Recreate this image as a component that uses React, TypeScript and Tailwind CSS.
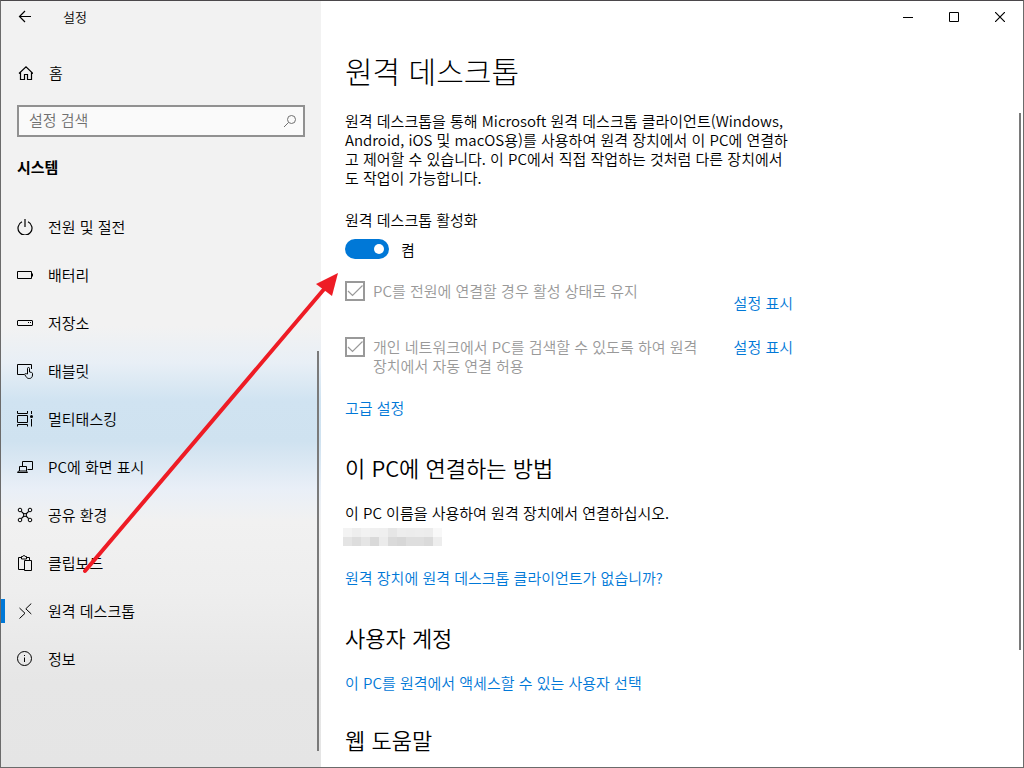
import React, { useState } from "react"

type IconProps = { children: React.ReactNode }

function Icon({ children }: IconProps) {
  return (
    <svg width="16" height="16" viewBox="0 0 16 16" fill="none" stroke="currentColor" strokeWidth="1" className="shrink-0" aria-hidden="true">
      {children}
    </svg>
  )
}

const NAV_ITEMS = [
  {
    label: "전원 및 절전",
    icon: <path d="M5 2.800a7 7 0 1 0 6 0M8 0v8" strokeWidth="1.200" />,
  },
  {
    label: "배터리",
    icon: <path d="M.5 4.500h14v7H.5zM15.500 6.500v3" />,
  },
  {
    label: "저장소",
    icon: (
      <>
        <rect x=".5" y="5.500" width="15" height="5" rx=".5" />
        <path d="M11 7.500h1M13 7.500h1" />
      </>
    ),
  },
  {
    label: "태블릿",
    icon: (
      <>
        <path d="M7 11.500H.5v-10h14V6" />
        <path d="M10.500 11V5.500a1 1 0 0 1 2 0V9l2 .4c.7.2 1 .6 1 1.300V12c0 2-1.200 3.500-3.200 3.500-1.600 0-2.500-.6-3.300-1.900l-1.500-2.400c.7-.8 1.600-.6 3-.2z" />
      </>
    ),
  },
  {
    label: "멀티태스킹",
    icon: (
      <>
        <path d="M.5 0v2.500h10V0M.5 15.500v-2h10v2M.5 4.500h10v7H.5zM14.500 0v3M14.500 8v7.500" />
        <circle cx="14.500" cy="5.500" r="1.500" fill="currentColor" stroke="none" />
      </>
    ),
  },
  {
    label: "PC에 화면 표시",
    icon: <path d="M5.500 7V2.500h10v8h-5M2.500 12V7.500h7V12M.5 13.500h10l-1-1.500H1.500z" />,
  },
  {
    label: "공유 환경",
    icon: (
      <>
        <circle cx="3" cy="3" r="1.800" />
        <circle cx="13" cy="3" r="1.800" />
        <circle cx="3" cy="13" r="1.800" />
        <circle cx="13" cy="13" r="1.800" />
        <circle cx="8" cy="8" r="1.500" />
        <path d="M4.300 4.300 7 7M11.700 4.300 9 7M4.300 11.700 7 9M11.700 11.700 9 9" strokeWidth="1.200" />
      </>
    ),
  },
  {
    label: "클립보드",
    icon: <path d="M7 14.500H1.500v-12H4M10 2.500h2.500V5M4.500 4V1.500h1.300c0-1.300 2.400-1.300 2.400 0h1.300V4zM7.500 5.500h7v10h-7z" />,
  },
  {
    label: "원격 데스크톱",
    icon: <path d="m2.500 5 5.500 5.300-5.500 5.200M14.300.5 8.800 5.800l5.500 5.200" />,
    active: true,
  },
  {
    label: "정보",
    icon: (
      <>
        <circle cx="7.500" cy="7.500" r="7" />
        <path d="M7.500 6.500V11M7.500 4v1" />
      </>
    ),
  },
]

// Pixelated PC name, two rows of blocks
const MOSAIC = [
  ["#f3f3f3", "#eeeeee", "#f2f2f2", "#f0f0f0", "#efefef", "#e6e6e6", "#ededed", "#ececec", "#ededed", "#ececec", "#f8f8f8"],
  ["#e4e4e4", "#dddddd", "#e5e5e5", "#d9d9d9", "#ebebeb", "#dadada", "#d7d7d7", "#dedede", "#dedede", "#dadada", "#ededed"],
]

function Sidebar() {
  return (
    <aside className="relative w-80 shrink-0 bg-[linear-gradient(180deg,#f2f2f2_0px,#f2f2f2_325px,#e8eff6_362px,#d0e3f1_400px,#cfe2f0_440px,#e9eff7_488px,#f1f1f1_520px,#eeeeee_590px,#e6e6e6_680px,#e5e5e5_767px)]">
      <div className="flex h-8 items-center pl-4">
        <button type="button" aria-label="뒤로" className="mr-[30px]">
          <Icon>
            <path d="M14 7.500H2.500M8 2 2.500 7.500 8 13" strokeWidth="1.200" />
          </Icon>
        </button>
        <span className="pb-0.5 text-[13px]">설정</span>
      </div>

      <a href="#home" className="mt-4 flex h-12 items-center gap-4 pl-4">
        <Icon>
          <path d="m2 8.500 7-6.700 7 6.700M3.500 7.500v7h4v-5h3v5h4v-7" strokeWidth="1.200" />
        </Icon>
        <span className="pb-0.5">홈</span>
      </a>

      <div className="relative mx-4 mt-2">
        <input
          type="text"
          aria-label="설정 검색"
          placeholder="설정 검색"
          className="block h-8 w-full border-2 border-[#919191] bg-white/60 pr-8 pb-[3px] pl-2.5 outline-none placeholder:text-[#707070]"
        />
        <svg width="14" height="14" viewBox="0 0 14 14" fill="none" stroke="#707070" className="absolute top-[9px] right-2" aria-hidden="true">
          <circle cx="8.500" cy="5.500" r="4" />
          <path d="M5.500 8.500 1 13" />
        </svg>
      </div>

      <h2 className="mt-1.5 flex h-12 items-center pb-0.5 pl-4 font-bold">시스템</h2>

      <nav className="mt-3" aria-label="시스템">
        {NAV_ITEMS.map((item) => (
          <a
            key={item.label}
            href={`#${item.label}`}
            aria-current={item.active ? "page" : undefined}
            className="relative flex h-12 items-center gap-[15px] pl-4"
          >
            {item.active && <span className="absolute left-0 h-6 w-1 bg-[#0078d7]" />}
            <Icon>{item.icon}</Icon>
            <span className="pb-0.5">{item.label}</span>
          </a>
        ))}
      </nav>

      {/* Scroll thumb */}
      <div className="absolute top-[350px] right-0.5 bottom-4 w-0.5 bg-[#7a7a7a]" />
    </aside>
  )
}

function WindowButtons() {
  return (
    <div className="flex h-8 justify-end">
      <button type="button" aria-label="최소화" className="flex w-[46px] items-center justify-center">
        <svg width="10" height="10" viewBox="0 0 10 10" stroke="black" fill="none">
          <path d="M0 5.500h10" />
        </svg>
      </button>
      <button type="button" aria-label="최대화" className="flex w-[46px] items-center justify-center">
        <svg width="10" height="10" viewBox="0 0 10 10" stroke="black" fill="none">
          <path d="M.5.5h9v9h-9z" />
        </svg>
      </button>
      <button type="button" aria-label="닫기" className="flex w-[46px] items-center justify-center">
        <svg width="10" height="10" viewBox="0 0 10 10" stroke="black" fill="none">
          <path d="m0 0 10 10M10 0 0 10" strokeWidth="1.200" />
        </svg>
      </button>
    </div>
  )
}

type OptionProps = { id: string; children: React.ReactNode }

function DisabledOption({ id, children }: OptionProps) {
  return (
    <div className="flex flex-1 gap-2">
      <span className="relative size-5 shrink-0">
        <input id={id} type="checkbox" defaultChecked disabled className="block size-5 appearance-none border-2 border-[#999999]" />
        <svg width="20" height="20" viewBox="0 0 20 20" fill="none" stroke="#999999" strokeWidth="1.200" className="absolute inset-0" aria-hidden="true">
          <path d="m3 10 4.500 4.500L17.500 4.500" />
        </svg>
      </span>
      <label htmlFor={id} className="text-[#999999]">{children}</label>
    </div>
  )
}

function Content() {
  const [enabled, setEnabled] = useState(true)

  return (
    <main className="relative min-w-0 flex-1 bg-white">
      <WindowButtons />

      <div className="mt-[17px] max-w-[472px] pl-6">
        <h1 className="text-[30px] leading-10 font-light">원격 데스크톱</h1>

        <p className="mt-[21px]">
          원격 데스크톱을 통해 Microsoft 원격 데스크톱 클라이언트(Windows, Android, iOS 및 macOS용)를 사용하여 원격 장치에서 이 PC에 연결하고 제어할 수 있습니다. 이 PC에서 직접 작업하는 것처럼 다른 장치에서도 작업이 가능합니다.
        </p>

        <label htmlFor="remote-desktop" className="mt-[23px] block">원격 데스크톱 활성화</label>
        <div className="mt-2.5 flex items-center gap-3">
          <input
            id="remote-desktop"
            type="checkbox"
            role="switch"
            checked={enabled}
            onChange={(e) => setEnabled(e.target.checked)}
            className="flex h-5 w-11 appearance-none items-center rounded-full bg-[#999999] px-[5px] before:size-2.5 before:rounded-full before:bg-white checked:justify-end checked:bg-[#0078d7]"
          />
          <span>{enabled ? "켬" : "끔"}</span>
        </div>

        <div className="mt-[22px] flex h-14 gap-6">
          <DisabledOption id="keep-awake">PC를 전원에 연결할 경우 활성 상태로 유지</DisabledOption>
          <a href="#power" className="mt-3 self-start text-[#0078d7]">설정 표시</a>
        </div>
        <div className="flex gap-6">
          <DisabledOption id="discoverable">개인 네트워크에서 PC를 검색할 수 있도록 하여 원격 장치에서 자동 연결 허용</DisabledOption>
          <a href="#network" className="self-start text-[#0078d7]">설정 표시</a>
        </div>

        <a href="#advanced" className="mt-[23px] block text-[#0078d7]">고급 설정</a>

        <h2 className="mt-[35px] text-[22px] leading-[30px]">이 PC에 연결하는 방법</h2>
        <p className="mt-[21px]">이 PC 이름을 사용하여 원격 장치에서 연결하십시오.</p>
        <svg width="99" height="18" className="mt-1.5 -ml-0.5 block" shapeRendering="crispEdges" aria-hidden="true">
          {MOSAIC.map((row, y) => row.map((fill, x) => <rect key={`${x}-${y}`} x={x * 9} y={y * 9} width="9" height="9" fill={fill} />))}
        </svg>
        <a href="#client" className="mt-[22px] block text-[#0078d7]">원격 장치에 원격 데스크톱 클라이언트가 없습니까?</a>

        <h2 className="mt-[35px] text-[22px] leading-[30px]">사용자 계정</h2>
        <a href="#users" className="mt-[21px] block text-[#0078d7]">이 PC를 원격에서 액세스할 수 있는 사용자 선택</a>

        <h2 className="mt-8 text-[22px] leading-[30px]">웹 도움말</h2>
      </div>

      {/* Scroll thumb */}
      <div className="absolute top-28 right-0.5 bottom-[117px] w-0.5 bg-[#7a7a7a]" />
    </main>
  )
}

export default function App() {
  return (
    <div
      lang="ko"
      className="relative flex min-h-screen border border-[#6b6b6b] border-t-[#4b484b] font-['Noto_Sans_CJK_KR',sans-serif] text-[15px] leading-[19px] font-[350] text-black"
    >
      <Sidebar />
      <Content />

      {/* Arrow pointing at the switch */}
      <svg width="340" height="580" viewBox="0 0 340 580" className="pointer-events-none absolute -top-px -left-px" aria-hidden="true">
        <path d="M85 571 325 288" stroke="#ee1c25" strokeWidth="4" strokeLinecap="round" />
        <path d="m338 273-22 11 16 12z" fill="#ee1c25" />
      </svg>
    </div>
  )
}
